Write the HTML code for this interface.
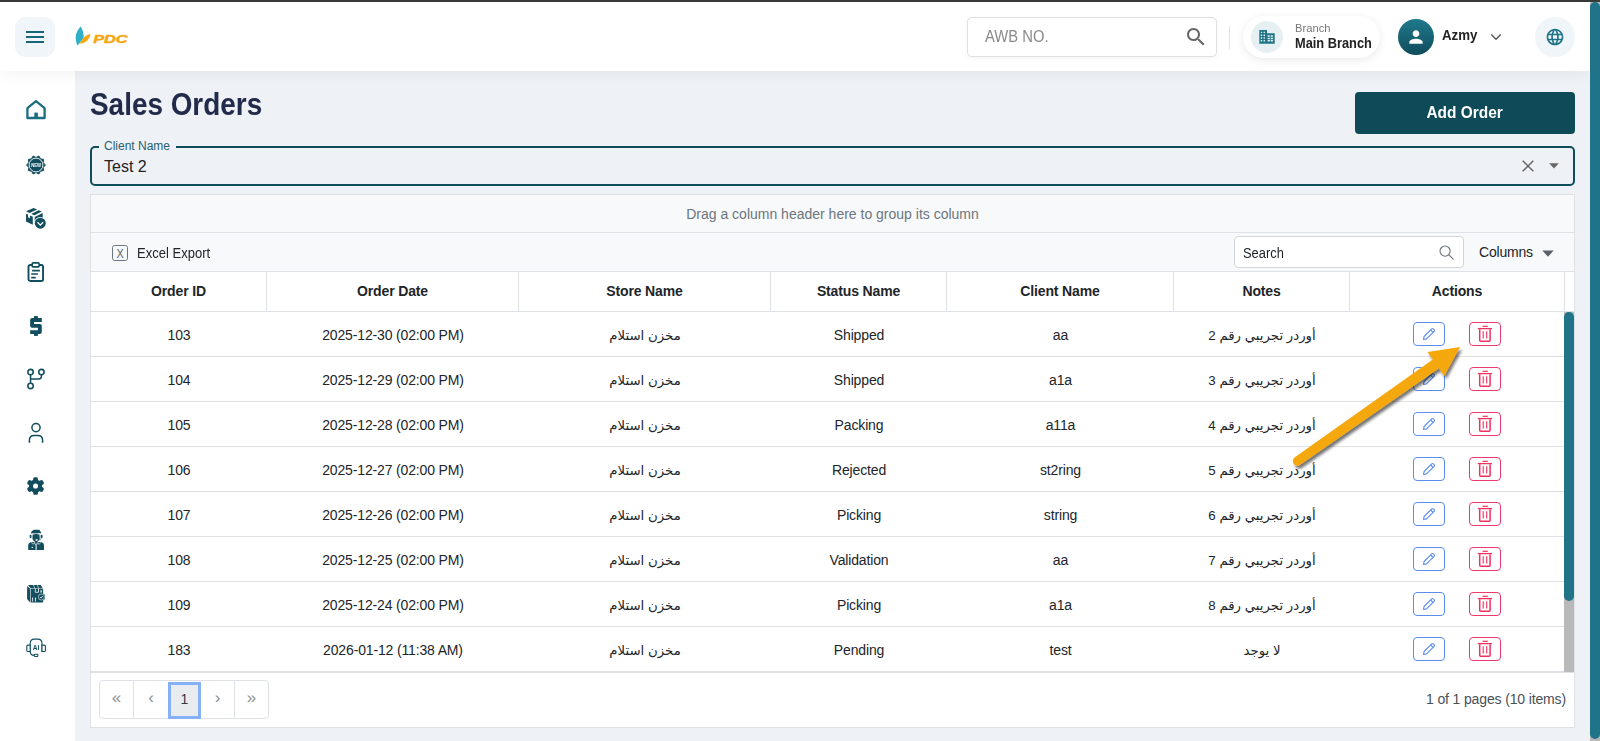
<!DOCTYPE html>
<html lang="en">
<head>
<meta charset="utf-8">
<title>Sales Orders</title>
<style>
*{box-sizing:border-box;margin:0;padding:0}
html,body{width:1600px;height:741px;overflow:hidden}
body{position:relative;background:#eef1f6;font-family:"Liberation Sans","DejaVu Sans",sans-serif;color:#212529}
.abs{position:absolute}
#topbar{left:0;top:0;width:1600px;height:2px;background:#3a3a3a}
#header{left:0;top:2px;width:1590px;height:69px;background:#fff;box-shadow:0 2px 16px rgba(0,0,0,.055);z-index:5}
#sidebar{left:0;top:71px;width:75px;height:670px;background:#fff}
#sidebar .shade{display:none}
#vscroll{z-index:6;left:1590px;top:2px;width:10px;height:739px;background:#b9b9b9}
#vscroll .thumb{left:0;top:0;width:10px;height:737px;background:#217487;border-radius:5px}
#burger{left:15px;top:15px;width:40px;height:40px;border-radius:11px;background:#f0f5f9}
#burger i{position:absolute;left:11px;width:18px;height:2px;background:#17657a}
#awb{left:967px;top:15px;width:250px;height:40px;border:1px solid #e0e0e0;border-radius:5px;background:#fff;box-shadow:0 1px 4px rgba(0,0,0,.06)}
#awb span{position:absolute;left:17px;top:9px;font-size:16px;line-height:20px;color:#8a8a8a;transform:scaleX(.925);transform-origin:0 0}
#branch{left:1243px;top:14px;width:137px;height:42px;border-radius:21px;background:#fff;box-shadow:0 2px 8px rgba(0,0,0,.09)}
#branch .ic{left:8px;top:5px;width:32px;height:32px;border-radius:16px;background:#e6f0f3}
#branch .t1{left:52px;top:5px;font-size:11px;line-height:14px;color:#777;transform:scaleX(1.02);transform-origin:0 0}
#branch .t2{left:52px;top:18px;font-size:14px;line-height:18px;font-weight:700;color:#222;white-space:nowrap;transform:scaleX(.915);transform-origin:0 0}
#avatar{left:1398px;top:17px;width:36px;height:36px;border-radius:18px;background:linear-gradient(#1f7a8c,#0f4c5c)}
#uname{left:1442px;top:24px;font-size:14px;line-height:18px;font-weight:700;color:#222;transform:scaleX(.95);transform-origin:0 0}
#globe{left:1535px;top:15px;width:40px;height:40px;border-radius:20px;background:#f0f5f9}
.sb-ic{position:absolute;overflow:visible}
h1{position:absolute;left:90px;top:87px;font-size:31px;line-height:36px;font-weight:700;color:#232b4a;white-space:nowrap;transform:scaleX(.9);transform-origin:0 0}
#addbtn{left:1355px;top:92px;width:220px;height:42px;border-radius:4px;background:#0f4a59;color:#fff;font-weight:700;font-size:16px;line-height:42px;text-align:center}
#addbtn span{display:inline-block;transform:scaleX(.965)}
#client{left:90px;top:146px;width:1485px;height:40px;border:2px solid #0f4c5c;border-radius:5px}
#client .lbl{position:absolute;left:7px;top:-10px;padding:0 6px 0 5px;background:#eef1f6;font-size:12px;line-height:16px;color:#2a6170;white-space:nowrap}
#client .val{position:absolute;left:12px;top:9px;font-size:16px;line-height:20px;color:#222}
#grid{left:90px;top:194px;width:1485px;height:534px;border:1px solid #dee2e6;background:#fff}
#grp{left:0;top:0;width:1483px;height:38px;background:#f8f9fb;border-bottom:1px solid #dee2e6;text-align:center;font-size:14px;line-height:39px;color:#6c757d}
#tb{left:0;top:38px;width:1483px;height:39px;background:#f8f9fb;border-bottom:1px solid #dee2e6;font-size:14px}
#srch{left:1143px;top:3px;width:230px;height:32px;border:1px solid #ced4da;border-radius:4px;background:#fff}
#srch span{position:absolute;left:8px;top:1px;line-height:31px;font-size:14px;color:#212529;transform:scaleX(.92);transform-origin:0 0}
#hdr{left:0;top:77px;width:1483px;height:40px;background:#fff;border-bottom:1px solid #dee2e6}
.hc{position:absolute;top:0;height:39px;line-height:38px;text-align:center;font-weight:700;font-size:14px;letter-spacing:-.15px;color:#212529;border-right:1px solid #dee2e6}
.row{position:absolute;left:0;width:1474px;height:45px;border-bottom:1px solid #dee2e6;background:#fff}
.c{position:absolute;top:1px;height:43px;line-height:45px;text-align:center;font-size:14px;letter-spacing:-.15px;color:#212529;white-space:nowrap}
.ar{font-family:"Liberation Sans","DejaVu Sans",sans-serif;font-size:13.3px;line-height:46px;letter-spacing:0}
.c1{left:0;width:176px}.c2{left:176px;width:252px}.c3{left:428px;width:252px}.c4{left:680px;width:176px}.c5{left:856px;width:227px}.c6{left:1083px;width:176px}.c7{left:1259px;width:215px}
.btn{position:absolute;top:9px;width:32px;height:24px;border-radius:4px;background:#fff}
.btn.e{left:63px;border:1px solid #5b8def}
.btn.d{left:119px;border:1px solid #ea3a6d}
.btn svg{position:absolute;left:0;top:0}
#gscroll{left:1473px;top:117px;width:10px;height:360px;background:#b9b9b9}
#gscroll .thumb{left:0;top:0;width:10px;height:289px;background:#217487;border-radius:5px 5px 5px 5px}
#pager{left:0;top:477px;width:1483px;height:55px;background:#fff;border-top:1px solid #dee2e6}
#pg{left:8px;top:7px;width:170px;height:39px;border:1px solid #dee2e6;border-radius:4px;background:#fff}
#pg span{position:absolute;top:0;height:37px;line-height:34px;text-align:center;font-size:17px;color:#8b9199}
#pginfo{right:8px;top:0;height:54px;line-height:52px;font-size:14px;color:#495057;white-space:nowrap;letter-spacing:-.14px}
</style>
</head>
<body>
<div id="topbar" class="abs"></div>
<div id="header" class="abs">
  <div id="burger" class="abs"><i style="top:14px"></i><i style="top:19px"></i><i style="top:24px"></i></div>
  <svg class="abs" style="left:70px;top:20px" width="70" height="30" viewBox="0 0 70 30">
    <path d="M10.6 4.6 C7.2 8.2 5.2 13 5.8 17.6 C6 19.8 6.6 21.8 7.6 23.6 C9.6 21 12 18 13.8 15.2 C13.6 11.2 12.6 7.4 10.6 4.6Z" fill="#2fb0c8"/>
    <path d="M9.7 21.6 C11.8 17.2 15.2 13 20.5 12 C19.4 17.2 15.8 21.6 9.7 21.6Z" fill="#f5a70e"/>
    <text x="23.2" y="20.9" font-family="Liberation Sans, sans-serif" font-weight="700" font-style="italic" font-size="11.4" fill="#f5a70e" stroke="#f5a70e" stroke-width="0.45" textLength="34.5" lengthAdjust="spacingAndGlyphs">PDC</text>
  </svg>
  <div class="abs" id="awb"><span>AWB NO.</span>
    <svg class="abs" style="left:216px;top:7px" width="24" height="24" viewBox="0 0 24 24"><path fill="#666" d="M15.5 14h-.79l-.28-.27C15.41 12.59 16 11.11 16 9.5 16 5.91 13.09 3 9.5 3S3 5.91 3 9.5 5.91 16 9.5 16c1.61 0 3.09-.59 4.23-1.57l.27.28v.79l5 4.99L20.49 19l-4.99-5zm-6 0C7.01 14 5 11.99 5 9.5S7.01 5 9.5 5 14 7.01 14 9.5 11.99 14 9.5 14z"/></svg>
  </div>
  <div class="abs" style="left:1229px;top:24px;width:1px;height:23px;background:#e3e3e3"></div>
  <div class="abs" id="branch">
    <div class="abs ic"><svg class="abs" style="left:8px;top:8px" width="16" height="16" viewBox="0 0 16 16"><path fill="#217487" fill-rule="evenodd" d="M0.3 1.1h7.7v3.1h7.7v10.6H0.3z M1.8 2.7v1.4h1.4V2.7z M4.6 2.7v1.4H6V2.7z M1.8 5.5v1.4h1.4V5.5z M4.6 5.5v1.4H6V5.5z M1.8 8.3v1.4h1.4V8.3z M4.6 8.3v1.4H6V8.3z M1.8 11.1v1.4h1.4v-1.4z M4.6 11.1v1.4H6v-1.4z M8.6 6.3v1.5h2.2V6.3z M11.7 6.3v1.5h2.2V6.3z M8.6 8.7v1.5h2.2V8.7z M11.7 8.7v1.5h2.2V8.7z M8.6 11.1v1.5h2.2v-1.5z M11.7 11.1v1.5h2.2v-1.5z"/></svg></div>
    <div class="abs t1">Branch</div><div class="abs t2">Main Branch</div>
  </div>
  <div class="abs" id="avatar"><svg class="abs" style="left:8px;top:8px" width="20" height="20" viewBox="0 0 24 24"><path fill="#fff" d="M12 12c2.21 0 4-1.79 4-4s-1.790-4-4-4-4 1.790-4 4 1.790 4 4 4zm0 2c-2.670 0-8 1.340-8 4v2h16v-2c0-2.660-5.330-4-8-4z"/></svg></div>
  <div class="abs" id="uname">Azmy</div>
  <svg class="abs" style="left:1489px;top:29px" width="14" height="12" viewBox="0 0 14 12"><path d="M2.3 3.6 L7 8.2 L11.7 3.6" fill="none" stroke="#555" stroke-width="1.4"/></svg>
  <div class="abs" id="globe"><svg class="abs" style="left:10px;top:10px" width="20" height="20" viewBox="0 0 24 24"><path fill="#217487" d="M11.99 2C6.470 2 2 6.480 2 12s4.470 10 9.990 10C17.520 22 22 17.520 22 12S17.520 2 11.990 2zm6.930 6h-2.950c-.32-1.250-.78-2.450-1.380-3.560 1.840.63 3.370 1.910 4.330 3.560zM12 4.040c.83 1.200 1.480 2.530 1.910 3.960h-3.820c.43-1.430 1.080-2.760 1.910-3.960zM4.260 14C4.100 13.360 4 12.690 4 12s.1-1.360.26-2h3.380c-.08.66-.14 1.320-.14 2 0 .68.060 1.340.14 2H4.260zm.82 2h2.950c.32 1.250.78 2.450 1.380 3.560-1.840-.63-3.370-1.900-4.330-3.560zm2.950-8H5.080c.96-1.660 2.490-2.930 4.330-3.560C8.810 5.550 8.350 6.750 8.030 8zM12 19.960c-.83-1.200-1.480-2.530-1.910-3.960h3.820c-.43 1.430-1.080 2.760-1.910 3.960zM14.340 14H9.660c-.09-.66-.16-1.320-.16-2 0-.68.070-1.350.16-2h4.680c.09.650.16 1.320.16 2 0 .68-.07 1.340-.16 2zm.25 5.560c.6-1.110 1.060-2.310 1.380-3.560h2.950c-.96 1.650-2.490 2.930-4.330 3.560zM16.360 14c.08-.66.14-1.320.14-2 0-.68-.06-1.340-.14-2h3.380c.16.640.26 1.310.26 2s-.1 1.360-.26 2h-3.380z"/></svg></div>
</div>
<div id="sidebar" class="abs"><div class="shade abs"></div>
  <svg class="sb-ic" style="left:24px;top:28px" width="24" height="22" viewBox="0 0 24 22"><path d="M3.4 9.2 L12 2.2 L20.6 9.2 V19 H3.4 Z" fill="none" stroke="#1b6d80" stroke-width="2.3" stroke-linejoin="round"/><rect x="10.3" y="13.6" width="3.6" height="5.6" fill="#1b6d80"/></svg>
  <svg class="sb-ic" style="left:26px;top:84px;opacity:.999" width="20" height="20" viewBox="0 0 20 20"><path d="M19.50 10.00 L17.23 12.35 L17.69 15.58 L14.47 16.15 L12.94 19.04 L10.00 17.60 L7.06 19.04 L5.53 16.15 L2.31 15.58 L2.77 12.35 L0.50 10.00 L2.77 7.65 L2.31 4.42 L5.53 3.85 L7.06 0.96 L10.00 2.40 L12.94 0.96 L14.47 3.85 L17.69 4.42 L17.23 7.65Z" fill="#134e5e" stroke="#134e5e" stroke-width="0.9" stroke-linejoin="round"/><circle cx="10" cy="10" r="6.9" fill="none" stroke="#fff" stroke-width="0.9"/><text x="10.1" y="12" text-anchor="middle" font-family="Liberation Sans, sans-serif" font-weight="700" font-size="5.6" fill="#fff" textLength="9.8" lengthAdjust="spacingAndGlyphs">NEW</text></svg>
  <svg class="sb-ic" style="left:20px;top:131px" width="32" height="32" viewBox="0 0 32 32"><path d="M6.05 9.3 L13.6 5.95 L17.15 7.5 L9.6 11.1 Z M11.1 11.9 L18.55 8.25 L21.8 9.4 L14.45 13.35 Z M6.05 11.7 L8 12.6 V15.3 L10 16.2 V13.5 L12.8 14.7 V22.8 L6.05 19.5 Z M14.7 15.1 L22.7 11.0 V16 L14.7 21 Z" fill="#134e5e"/><circle cx="20.3" cy="21.2" r="6.15" fill="#fff"/><circle cx="20.3" cy="21.2" r="5.45" fill="#134e5e"/><path d="M17.5 20.3 L20.3 23.2 L23.1 20.3" fill="none" stroke="#fff" stroke-width="1.25"/></svg>
  <svg class="sb-ic" style="left:26px;top:190px" width="20" height="22" viewBox="0 0 20 22"><rect x="2.5" y="3.95" width="14.55" height="16" rx="1.7" fill="none" stroke="#134e5e" stroke-width="1.9"/><rect x="6.2" y="1.85" width="6.9" height="4" rx="0.8" fill="#fff" stroke="#134e5e" stroke-width="1.6"/><path d="M6.1 9.6 H13.9 M5.2 12.95 H11.9 M5.2 16.6 H9.8" stroke="#134e5e" stroke-width="1.6" fill="none"/></svg>
  <svg class="sb-ic" style="left:20px;top:239px" width="32" height="32" viewBox="0 0 32 32"><path d="M21.8 9.95 H12.08 V15.85 H19.85 V22.05 H10.15" fill="none" stroke="#134e5e" stroke-width="3.85" stroke-linejoin="round"/><rect x="14" y="6.05" width="3.9" height="2.4" fill="#134e5e"/><rect x="14" y="23.6" width="3.9" height="2.3" fill="#134e5e"/></svg>
  <svg class="sb-ic" style="left:25px;top:296px" width="22" height="24" viewBox="0 0 22 24"><circle cx="5.55" cy="5.05" r="2.7" fill="none" stroke="#134e5e" stroke-width="1.55"/><circle cx="16.4" cy="5.05" r="2.7" fill="none" stroke="#134e5e" stroke-width="1.55"/><circle cx="5.55" cy="18.9" r="2.7" fill="none" stroke="#134e5e" stroke-width="1.55"/><path d="M5.55 7.7 V16.2 M16.4 7.7 V9.6 Q16.4 12 14 12 H5.55" fill="none" stroke="#134e5e" stroke-width="1.5"/></svg>
  <svg class="sb-ic" style="left:26px;top:350px" width="20" height="24" viewBox="0 0 20 24"><circle cx="10" cy="6.6" r="4.1" fill="none" stroke="#134e5e" stroke-width="1.5"/><path d="M3.4 21.8 V19.4 Q3.4 14.6 8.2 14.6 H11.8 Q16.6 14.6 16.6 19.4 V21.8" fill="none" stroke="#134e5e" stroke-width="1.5"/></svg>
  <svg class="sb-ic" style="left:20px;top:399px" width="32" height="32" viewBox="0 0 32 32"><g transform="translate(15.55 16)" fill="#134e5e"><circle r="6.6"/><rect x="-2.4" y="-8.85" width="4.8" height="6" rx="1.5" transform="rotate(0)"/><rect x="-2.4" y="-8.85" width="4.8" height="6" rx="1.5" transform="rotate(60)"/><rect x="-2.4" y="-8.85" width="4.8" height="6" rx="1.5" transform="rotate(120)"/><rect x="-2.4" y="-8.85" width="4.8" height="6" rx="1.5" transform="rotate(180)"/><rect x="-2.4" y="-8.85" width="4.8" height="6" rx="1.5" transform="rotate(240)"/><rect x="-2.4" y="-8.85" width="4.8" height="6" rx="1.5" transform="rotate(300)"/><circle r="2.55" fill="#fff"/></g></svg>
  <svg class="sb-ic" style="left:20px;top:453px" width="32" height="32" viewBox="0 0 32 32"><path d="M11 9.5 C11 7.9 11.9 7.2 12.9 6.6 C13.2 6.1 13.6 5.85 14.2 5.85 H18.4 C19.4 5.85 19.8 6.3 20.1 6.9 C20.9 7.6 21.2 8.4 21.2 9.5 C18.6 8.8 13.6 8.8 11 9.5Z" fill="#134e5e"/><rect x="12.5" y="10.1" width="7.2" height="7.3" rx="3.3" fill="#134e5e"/><rect x="9.7" y="10.8" width="1.55" height="3.5" rx="0.7" fill="#134e5e"/><rect x="20.95" y="10.8" width="1.55" height="3.5" rx="0.7" fill="#134e5e"/><path d="M11.9 13.6 V12.6 Q11.9 9.7 16.1 9.7 Q20.3 9.7 20.3 12.6 V13.6" fill="none" stroke="#134e5e" stroke-width="0.5"/><path d="M21.2 14.2 Q21.2 16.1 18 16.1" fill="none" stroke="#134e5e" stroke-width="0.6"/><rect x="15.4" y="15.2" width="2.4" height="1.5" rx="0.7" fill="#fff"/><rect x="14.7" y="17" width="2.9" height="2.6" fill="#134e5e"/><path d="M8.2 25.9 V21.2 Q8.2 18.7 10.6 18.2 L13.4 17.9 L16.1 20.6 L18.8 17.9 L21.6 18.2 Q24 18.7 24 21.2 V25.9 Z" fill="#134e5e"/><path d="M11.4 18.6 Q13 21 14.4 19.6 L16.1 21.2 L17.8 19.6 Q19.2 21 20.8 18.6" fill="none" stroke="#fff" stroke-width="0.7"/><path d="M16.1 21.2 V25.9" stroke="#fff" stroke-width="1" /><rect x="11.6" y="22.9" width="1.4" height="0.9" fill="#fff"/></svg>
  <svg class="sb-ic" style="left:20px;top:507px" width="32" height="32" viewBox="0 0 32 32"><path d="M7.1 8 L10.15 10.8 V24.5 L7.1 20.9 Z" fill="#134e5e"/><path d="M8 6.9 H20.7 L22.9 10.4 H10.6 Z" fill="#134e5e"/><rect x="10.7" y="10.9" width="12.4" height="13.7" rx="0.6" fill="#134e5e"/><path d="M13.4 6.9 L14.9 10.4 M17.3 6.9 L18.8 10.4" stroke="#fff" stroke-width="0.6"/><path d="M15.3 10.8 V14.3 H18.5 V10.8" fill="none" stroke="#fff" stroke-width="0.8"/><rect x="20.4" y="12.2" width="1.5" height="2.4" fill="#cfdde0"/><path d="M12.6 20.4 V23.6 M15.5 20.4 V23.6" stroke="#fff" stroke-width="0.8"/><circle cx="12.6" cy="20.2" r="0.6" fill="#fff"/><circle cx="15.5" cy="20.2" r="0.6" fill="#fff"/><circle cx="21.4" cy="19" r="3.75" fill="#134e5e"/><circle cx="21.4" cy="19" r="3.05" fill="none" stroke="#fff" stroke-width="0.55"/><path d="M20.1 19.1 L21.1 20.1 L22.8 18" fill="none" stroke="#fff" stroke-width="0.8"/></svg>
  <svg class="sb-ic" style="left:20px;top:561px;opacity:.999" width="32" height="32" viewBox="0 0 32 32"><path d="M10.2 20 V11.6 Q10.2 7.15 14.4 7.15 H17.8 Q22 7.15 22 11.6 V20" fill="none" stroke="#134e5e" stroke-width="1.1"/><path d="M10.2 13.1 H7.9 Q6.8 13.1 6.8 14.2 V18.4 Q6.8 19.5 7.9 19.5 H10.2 Z" fill="#fff" stroke="#134e5e" stroke-width="1.1"/><path d="M22 13.1 H24.3 Q25.4 13.1 25.4 14.2 V18.4 Q25.4 19.5 24.3 19.5 H22 Z" fill="#fff" stroke="#134e5e" stroke-width="1.1"/><path d="M10.2 19.6 Q10.4 23.3 14.4 23.4" fill="none" stroke="#134e5e" stroke-width="1.1"/><rect x="14.3" y="22.3" width="3.6" height="2.2" rx="0.8" fill="#fff" stroke="#134e5e" stroke-width="1.1"/><text x="16" y="17.7" text-anchor="middle" font-family="Liberation Sans, sans-serif" font-weight="700" font-size="6.6" fill="#134e5e">AI</text></svg>
</div>
<div id="vscroll" class="abs"><div class="thumb abs"></div></div>

<h1>Sales Orders</h1>
<div id="addbtn" class="abs"><span>Add Order</span></div>
<div id="client" class="abs"><span class="lbl">Client Name</span><span class="val">Test 2</span>
  <svg class="abs" style="left:1430px;top:12px" width="12" height="12" viewBox="0 0 12 12"><path d="M0.7 0.7 L11.3 11.3 M11.3 0.7 L0.7 11.3" stroke="#666" stroke-width="1.5" fill="none"/></svg>
  <svg class="abs" style="left:1457px;top:15px" width="10" height="6" viewBox="0 0 10 6"><path d="M0.2 0.3 H9.8 L5 5.5Z" fill="#666"/></svg>
</div>

<div id="grid" class="abs">
  <div id="grp" class="abs">Drag a column header here to group its column</div>
  <div id="tb" class="abs">
    <svg class="abs" style="left:21px;top:12px" width="16" height="16" viewBox="0 0 16 16"><rect x="0.5" y="0.5" width="15" height="15" rx="2.2" fill="none" stroke="#6c757d" stroke-width="1"/><text x="8" y="12.6" text-anchor="middle" font-family="Liberation Sans, sans-serif" font-size="13" fill="#5c636a" textLength="7.2" lengthAdjust="spacingAndGlyphs">X</text></svg>
    <span class="abs" style="left:46px;top:1px;line-height:39px;color:#212529;transform:scaleX(.93);transform-origin:0 0">Excel Export</span>
    <div class="abs" id="srch"><span>Search</span><svg class="abs" style="left:203px;top:7px" width="17" height="17" viewBox="0 0 17 17"><circle cx="7.1" cy="7.1" r="5.1" fill="none" stroke="#6c757d" stroke-width="1.1"/><path d="M10.9 10.9 L15.2 15.2" stroke="#6c757d" stroke-width="1.2" stroke-linecap="round"/></svg></div>
    <span class="abs" style="left:1388px;top:0;line-height:39px;color:#212529;letter-spacing:-.2px">Columns</span>
    <svg class="abs" style="left:1451px;top:17px" width="12" height="7" viewBox="0 0 12 7"><path d="M0.3 0.4 H11.7 L6 6.8Z" fill="#5a6169"/></svg>
  </div>
  <div id="hdr" class="abs">
    <div class="hc c1">Order ID</div><div class="hc c2">Order Date</div><div class="hc c3">Store Name</div><div class="hc c4">Status Name</div><div class="hc c5">Client Name</div><div class="hc c6">Notes</div><div class="hc c7">Actions</div>
  </div>
  <div class="row" style="top:117px"><div class="c c1">103</div><div class="c c2">2025-12-30 (02:00 PM)</div><div class="c c3 ar" dir="rtl">مخزن استلام</div><div class="c c4">Shipped</div><div class="c c5">aa</div><div class="c c6 ar" dir="rtl">أوردر تجريبي رقم 2</div><div class="c c7"><span class="btn e"><svg width="30" height="22" viewBox="0 0 30 22"><g transform="translate(9,5)" fill="none" stroke="#5b8def" stroke-width="1.1" stroke-linejoin="round"><path d="M0.5 11.5 L1.1 8.5 L8.7 0.9 Q9.5 0.1 10.3 0.9 L11.1 1.7 Q11.9 2.5 11.1 3.3 L3.5 10.9 Z"/><path d="M7.6 2 L10 4.4"/></g></svg></span><span class="btn d"><svg width="30" height="22" viewBox="0 0 30 22"><g fill="none" stroke="#f0305f"><path d="M12.6 3.3 H17.8" stroke-width="1.2"/><path d="M7.8 5.6 H22" stroke-width="1.3"/><path d="M9.7 6.2 V17.3 Q9.7 18.3 10.7 18.3 H19.1 Q20.1 18.3 20.1 17.3 V6.2" stroke-width="1.5"/><path d="M13.2 8.2 V15.6 M16.7 8.2 V15.6" stroke-width="1.1"/></g></svg></span></div></div>
  <div class="row" style="top:162px"><div class="c c1">104</div><div class="c c2">2025-12-29 (02:00 PM)</div><div class="c c3 ar" dir="rtl">مخزن استلام</div><div class="c c4">Shipped</div><div class="c c5">a1a</div><div class="c c6 ar" dir="rtl">أوردر تجريبي رقم 3</div><div class="c c7"><span class="btn e"><svg width="30" height="22" viewBox="0 0 30 22"><g transform="translate(9,5)" fill="none" stroke="#5b8def" stroke-width="1.1" stroke-linejoin="round"><path d="M0.5 11.5 L1.1 8.5 L8.7 0.9 Q9.5 0.1 10.3 0.9 L11.1 1.7 Q11.9 2.5 11.1 3.3 L3.5 10.9 Z"/><path d="M7.6 2 L10 4.4"/></g></svg></span><span class="btn d"><svg width="30" height="22" viewBox="0 0 30 22"><g fill="none" stroke="#f0305f"><path d="M12.6 3.3 H17.8" stroke-width="1.2"/><path d="M7.8 5.6 H22" stroke-width="1.3"/><path d="M9.7 6.2 V17.3 Q9.7 18.3 10.7 18.3 H19.1 Q20.1 18.3 20.1 17.3 V6.2" stroke-width="1.5"/><path d="M13.2 8.2 V15.6 M16.7 8.2 V15.6" stroke-width="1.1"/></g></svg></span></div></div>
  <div class="row" style="top:207px"><div class="c c1">105</div><div class="c c2">2025-12-28 (02:00 PM)</div><div class="c c3 ar" dir="rtl">مخزن استلام</div><div class="c c4">Packing</div><div class="c c5">a11a</div><div class="c c6 ar" dir="rtl">أوردر تجريبي رقم 4</div><div class="c c7"><span class="btn e"><svg width="30" height="22" viewBox="0 0 30 22"><g transform="translate(9,5)" fill="none" stroke="#5b8def" stroke-width="1.1" stroke-linejoin="round"><path d="M0.5 11.5 L1.1 8.5 L8.7 0.9 Q9.5 0.1 10.3 0.9 L11.1 1.7 Q11.9 2.5 11.1 3.3 L3.5 10.9 Z"/><path d="M7.6 2 L10 4.4"/></g></svg></span><span class="btn d"><svg width="30" height="22" viewBox="0 0 30 22"><g fill="none" stroke="#f0305f"><path d="M12.6 3.3 H17.8" stroke-width="1.2"/><path d="M7.8 5.6 H22" stroke-width="1.3"/><path d="M9.7 6.2 V17.3 Q9.7 18.3 10.7 18.3 H19.1 Q20.1 18.3 20.1 17.3 V6.2" stroke-width="1.5"/><path d="M13.2 8.2 V15.6 M16.7 8.2 V15.6" stroke-width="1.1"/></g></svg></span></div></div>
  <div class="row" style="top:252px"><div class="c c1">106</div><div class="c c2">2025-12-27 (02:00 PM)</div><div class="c c3 ar" dir="rtl">مخزن استلام</div><div class="c c4">Rejected</div><div class="c c5">st2ring</div><div class="c c6 ar" dir="rtl">أوردر تجريبي رقم 5</div><div class="c c7"><span class="btn e"><svg width="30" height="22" viewBox="0 0 30 22"><g transform="translate(9,5)" fill="none" stroke="#5b8def" stroke-width="1.1" stroke-linejoin="round"><path d="M0.5 11.5 L1.1 8.5 L8.7 0.9 Q9.5 0.1 10.3 0.9 L11.1 1.7 Q11.9 2.5 11.1 3.3 L3.5 10.9 Z"/><path d="M7.6 2 L10 4.4"/></g></svg></span><span class="btn d"><svg width="30" height="22" viewBox="0 0 30 22"><g fill="none" stroke="#f0305f"><path d="M12.6 3.3 H17.8" stroke-width="1.2"/><path d="M7.8 5.6 H22" stroke-width="1.3"/><path d="M9.7 6.2 V17.3 Q9.7 18.3 10.7 18.3 H19.1 Q20.1 18.3 20.1 17.3 V6.2" stroke-width="1.5"/><path d="M13.2 8.2 V15.6 M16.7 8.2 V15.6" stroke-width="1.1"/></g></svg></span></div></div>
  <div class="row" style="top:297px"><div class="c c1">107</div><div class="c c2">2025-12-26 (02:00 PM)</div><div class="c c3 ar" dir="rtl">مخزن استلام</div><div class="c c4">Picking</div><div class="c c5">string</div><div class="c c6 ar" dir="rtl">أوردر تجريبي رقم 6</div><div class="c c7"><span class="btn e"><svg width="30" height="22" viewBox="0 0 30 22"><g transform="translate(9,5)" fill="none" stroke="#5b8def" stroke-width="1.1" stroke-linejoin="round"><path d="M0.5 11.5 L1.1 8.5 L8.7 0.9 Q9.5 0.1 10.3 0.9 L11.1 1.7 Q11.9 2.5 11.1 3.3 L3.5 10.9 Z"/><path d="M7.6 2 L10 4.4"/></g></svg></span><span class="btn d"><svg width="30" height="22" viewBox="0 0 30 22"><g fill="none" stroke="#f0305f"><path d="M12.6 3.3 H17.8" stroke-width="1.2"/><path d="M7.8 5.6 H22" stroke-width="1.3"/><path d="M9.7 6.2 V17.3 Q9.7 18.3 10.7 18.3 H19.1 Q20.1 18.3 20.1 17.3 V6.2" stroke-width="1.5"/><path d="M13.2 8.2 V15.6 M16.7 8.2 V15.6" stroke-width="1.1"/></g></svg></span></div></div>
  <div class="row" style="top:342px"><div class="c c1">108</div><div class="c c2">2025-12-25 (02:00 PM)</div><div class="c c3 ar" dir="rtl">مخزن استلام</div><div class="c c4">Validation</div><div class="c c5">aa</div><div class="c c6 ar" dir="rtl">أوردر تجريبي رقم 7</div><div class="c c7"><span class="btn e"><svg width="30" height="22" viewBox="0 0 30 22"><g transform="translate(9,5)" fill="none" stroke="#5b8def" stroke-width="1.1" stroke-linejoin="round"><path d="M0.5 11.5 L1.1 8.5 L8.7 0.9 Q9.5 0.1 10.3 0.9 L11.1 1.7 Q11.9 2.5 11.1 3.3 L3.5 10.9 Z"/><path d="M7.6 2 L10 4.4"/></g></svg></span><span class="btn d"><svg width="30" height="22" viewBox="0 0 30 22"><g fill="none" stroke="#f0305f"><path d="M12.6 3.3 H17.8" stroke-width="1.2"/><path d="M7.8 5.6 H22" stroke-width="1.3"/><path d="M9.7 6.2 V17.3 Q9.7 18.3 10.7 18.3 H19.1 Q20.1 18.3 20.1 17.3 V6.2" stroke-width="1.5"/><path d="M13.2 8.2 V15.6 M16.7 8.2 V15.6" stroke-width="1.1"/></g></svg></span></div></div>
  <div class="row" style="top:387px"><div class="c c1">109</div><div class="c c2">2025-12-24 (02:00 PM)</div><div class="c c3 ar" dir="rtl">مخزن استلام</div><div class="c c4">Picking</div><div class="c c5">a1a</div><div class="c c6 ar" dir="rtl">أوردر تجريبي رقم 8</div><div class="c c7"><span class="btn e"><svg width="30" height="22" viewBox="0 0 30 22"><g transform="translate(9,5)" fill="none" stroke="#5b8def" stroke-width="1.1" stroke-linejoin="round"><path d="M0.5 11.5 L1.1 8.5 L8.7 0.9 Q9.5 0.1 10.3 0.9 L11.1 1.7 Q11.9 2.5 11.1 3.3 L3.5 10.9 Z"/><path d="M7.6 2 L10 4.4"/></g></svg></span><span class="btn d"><svg width="30" height="22" viewBox="0 0 30 22"><g fill="none" stroke="#f0305f"><path d="M12.6 3.3 H17.8" stroke-width="1.2"/><path d="M7.8 5.6 H22" stroke-width="1.3"/><path d="M9.7 6.2 V17.3 Q9.7 18.3 10.7 18.3 H19.1 Q20.1 18.3 20.1 17.3 V6.2" stroke-width="1.5"/><path d="M13.2 8.2 V15.6 M16.7 8.2 V15.6" stroke-width="1.1"/></g></svg></span></div></div>
  <div class="row" style="top:432px"><div class="c c1">183</div><div class="c c2">2026-01-12 (11:38 AM)</div><div class="c c3 ar" dir="rtl">مخزن استلام</div><div class="c c4">Pending</div><div class="c c5">test</div><div class="c c6 ar" dir="rtl">لا يوجد</div><div class="c c7"><span class="btn e"><svg width="30" height="22" viewBox="0 0 30 22"><g transform="translate(9,5)" fill="none" stroke="#5b8def" stroke-width="1.1" stroke-linejoin="round"><path d="M0.5 11.5 L1.1 8.5 L8.7 0.9 Q9.5 0.1 10.3 0.9 L11.1 1.7 Q11.9 2.5 11.1 3.3 L3.5 10.9 Z"/><path d="M7.6 2 L10 4.4"/></g></svg></span><span class="btn d"><svg width="30" height="22" viewBox="0 0 30 22"><g fill="none" stroke="#f0305f"><path d="M12.6 3.3 H17.8" stroke-width="1.2"/><path d="M7.8 5.6 H22" stroke-width="1.3"/><path d="M9.7 6.2 V17.3 Q9.7 18.3 10.7 18.3 H19.1 Q20.1 18.3 20.1 17.3 V6.2" stroke-width="1.5"/><path d="M13.2 8.2 V15.6 M16.7 8.2 V15.6" stroke-width="1.1"/></g></svg></span></div></div>
  <div id="gscroll" class="abs"><div class="thumb abs"></div></div>
  <div id="pager" class="abs">
    <div id="pg" class="abs">
      <span style="left:0;width:34px;border-right:1px solid #dee2e6">«</span>
      <span style="left:34px;width:34px">‹</span>
      <span style="left:68px;width:33px;top:1px;height:37px;line-height:35px;box-shadow:inset 0 0 0 3px #86b0f8;background:#e9ecef;color:#343a40;font-size:14px">1</span>
      <span style="left:101px;width:34px;border-right:1px solid #dee2e6">›</span>
      <span style="left:135px;width:33px">»</span>
    </div>
    <div id="pginfo" class="abs">1 of 1 pages (10 items)</div>
  </div>
</div>
<svg class="abs" style="left:1270px;top:320px;overflow:visible" width="220" height="170" viewBox="1270 320 220 170"><defs><filter id="ash" x="-10%" y="-20%" width="130%" height="150%"><feGaussianBlur in="SourceAlpha" stdDeviation="1.8"/><feOffset dx="1.5" dy="3"/><feComponentTransfer><feFuncA type="linear" slope="0.55"/></feComponentTransfer><feMerge><feMergeNode/><feMergeNode in="SourceGraphic"/></feMerge></filter></defs><g filter="url(#ash)"><path transform="translate(1297.5 461) rotate(-35.05)" d="M0 -4.7 L169 -5.4 L169 -14.65 L198.5 0 L169 14.65 L169 5.4 L0 4.7 A4.7 4.7 0 0 1 0 -4.7Z" fill="#f5a80f"/></g></svg>
</body>
</html>
